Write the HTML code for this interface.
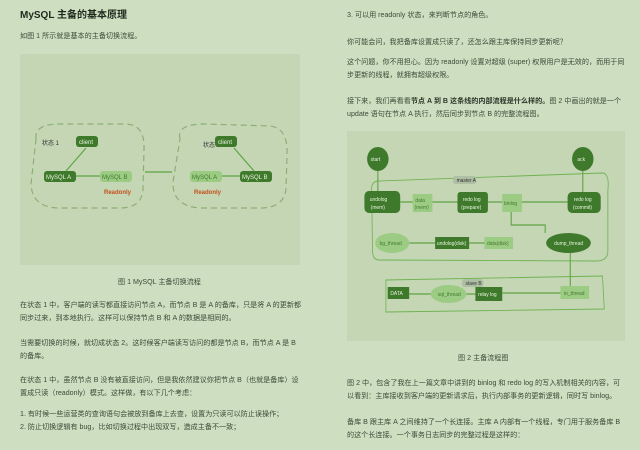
<!DOCTYPE html><html><head><meta charset="utf-8"><style>
body{margin:0;width:640px;height:450px;background:#cedfc1;font-family:"Liberation Sans","Noto Sans CJK SC",sans-serif;color:#3a4a38;position:relative;overflow:hidden}
.t{position:absolute;font-size:7.1px;line-height:13px;white-space:nowrap}
.h{font-size:10px;font-weight:bold;color:#1f2a1e}
b{color:#2a3528}
.box{position:absolute;background:#c4d6b4}
</style></head><body>
<div class="t h" style="left:20px;top:9px">MySQL 主备的基本原理</div>
<div class="t" style="left:20px;top:30px">如图 1 所示就是基本的主备切换流程。</div>
<div class="box" style="left:20px;top:54px;width:280px;height:211px">
<svg width="280" height="211" font-family="Liberation Sans" font-size="6">
<path d="M16 85 Q14 70 40 70 L105 70 Q125 70 124 95 L123 135 Q122 154 100 154 L40 154 Q12 154 11 130 Z" fill="none" stroke="#8fae77" stroke-width="1.2" stroke-dasharray="6 4"/>
<path d="M160 85 Q156 70 185 70 L250 72 Q268 74 267 100 L266 135 Q264 154 240 154 L180 154 Q152 152 153 128 Z" fill="none" stroke="#8fae77" stroke-width="1.2" stroke-dasharray="6 4"/>
<text x="22" y="91" fill="#333">状态 1</text><text x="183" y="93" fill="#333">状态 2</text>
<rect x="56" y="82" width="22" height="11" rx="3" fill="#3f7a2c"/><text x="59" y="90" fill="#e8f3df">client</text>
<rect x="24" y="117" width="32" height="11" rx="3" fill="#3f7a2c"/><text x="26" y="125" fill="#e8f3df">MySQL A</text>
<rect x="80" y="117" width="32" height="11" rx="3" fill="#9ccc84"/><text x="82" y="125" fill="#3f7a2c">MySQL B</text>
<text x="84" y="140" fill="#c5501f" font-weight="bold">Readonly</text>
<path d="M66 94 L46 117 M56 122 L80 122 M125 118 L152 118" stroke="#5ea345" stroke-width="1.2"/>
<rect x="195" y="82" width="22" height="11" rx="3" fill="#3f7a2c"/><text x="198" y="90" fill="#e8f3df">client</text>
<rect x="170" y="117" width="32" height="11" rx="3" fill="#9ccc84"/><text x="172" y="125" fill="#3f7a2c">MySQL A</text>
<rect x="220" y="117" width="32" height="11" rx="3" fill="#3f7a2c"/><text x="222" y="125" fill="#e8f3df">MySQL B</text>
<text x="174" y="140" fill="#c5501f" font-weight="bold">Readonly</text>
<path d="M214 94 L234 117 M220 122 L202 122" stroke="#5ea345" stroke-width="1.2"/>
</svg></div>
<div class="t" style="left:118px;top:276px">图 1 MySQL 主备切换流程</div>
<div class="t" style="left:20px;top:299px">在状态 1 中，客户端的读写都直接访问节点 A，而节点 B 是 A 的备库，只是将 A 的更新都<br>同步过来，到本地执行。这样可以保持节点 B 和 A 的数据是相同的。</div>
<div class="t" style="left:20px;top:337px">当需要切换的时候，就切成状态 2。这时候客户端读写访问的都是节点 B，而节点 A 是 B<br>的备库。</div>
<div class="t" style="left:20px;top:374px">在状态 1 中，虽然节点 B 没有被直接访问，但是我依然建议你把节点 B（也就是备库）设<br>置成只读（readonly）模式。这样做，有以下几个考虑：</div>
<div class="t" style="left:20px;top:408px">1. 有时候一些运营类的查询语句会被放到备库上去查，设置为只读可以防止误操作；<br>2. 防止切换逻辑有 bug，比如切换过程中出现双写，造成主备不一致；</div>

<div class="t" style="left:347px;top:9px">3. 可以用 readonly 状态，来判断节点的角色。</div>
<div class="t" style="left:347px;top:36px">你可能会问，我把备库设置成只读了，还怎么跟主库保持同步更新呢？</div>
<div class="t" style="left:347px;top:56px">这个问题，你不用担心。因为 readonly 设置对超级 (super) 权限用户是无效的，而用于同<br>步更新的线程，就拥有超级权限。</div>
<div class="t" style="left:347px;top:95px">接下来，我们再看看<b>节点 A 到 B 这条线的内部流程是什么样的。</b>图 2 中画出的就是一个<br>update 语句在节点 A 执行，然后同步到节点 B 的完整流程图。</div>
<div class="box" style="left:347px;top:131px;width:278px;height:210px">
<svg width="278" height="210" font-family="Liberation Sans" font-size="5.5">
<g transform="translate(21,0) scale(0.895,1)">
<path d="M12 50 L262 42 Q270 42 268 60 L268 120 Q268 130 255 130 L12 129 Q4 129 5 115 L4 58 Q4 50 12 50Z" fill="none" stroke="#6fb252" stroke-width="0.9"/>
<path d="M20 149 L262 145 L264 178 L20 181Z" fill="none" stroke="#6fb252" stroke-width="0.9"/>
<rect x="95" y="45" width="26" height="8" rx="3" fill="#aebfa3"/><text x="99" y="51" fill="#333">master A</text>
<rect x="105" y="148" width="24" height="8" rx="3" fill="#aebfa3"/><text x="109" y="154" fill="#333">slave B</text>
<circle cx="11" cy="28" r="12" fill="#3f7a2c"/><text x="3" y="30" fill="#e8f3df">start</text>
<circle cx="240" cy="28" r="12" fill="#3f7a2c"/><text x="234" y="30" fill="#e8f3df">ack</text>
<rect x="-4" y="60" width="40" height="22" rx="5" fill="#3f7a2c"/><text x="2" y="70" fill="#e8f3df">undolog</text><text x="3" y="78" fill="#e8f3df">(mem)</text>
<rect x="50" y="63" width="22" height="18" fill="#9ccc84"/><text x="53" y="71" fill="#3f7a2c">data</text><text x="52" y="78" fill="#3f7a2c">(mem)</text>
<rect x="100" y="61" width="34" height="21" rx="3" fill="#3f7a2c"/><text x="106" y="70" fill="#e8f3df">redo log</text><text x="104" y="78" fill="#e8f3df">(prepare)</text>
<rect x="150" y="63" width="22" height="18" fill="#9ccc84"/><text x="152" y="74" fill="#3f7a2c">binlog</text>
<rect x="223" y="61" width="37" height="21" rx="5" fill="#3f7a2c"/><text x="230" y="70" fill="#e8f3df">redo log</text><text x="229" y="78" fill="#e8f3df">(commit)</text>
<ellipse cx="27" cy="112" rx="19" ry="10" fill="#9ccc84"/><text x="13" y="114" fill="#3f7a2c">bg_thread</text>
<rect x="75" y="106" width="38" height="12" fill="#3f7a2c"/><text x="77" y="114" fill="#e8f3df">undolog(disk)</text>
<rect x="130" y="106" width="32" height="12" fill="#9ccc84"/><text x="133" y="114" fill="#3f7a2c">data(disk)</text>
<ellipse cx="224" cy="112" rx="25" ry="10" fill="#3f7a2c"/><text x="208" y="114" fill="#e8f3df">dump_thread</text>
<rect x="22" y="156" width="24" height="12" fill="#3f7a2c"/><text x="25" y="164" fill="#e8f3df">DATA</text>
<ellipse cx="90" cy="163" rx="20" ry="9" fill="#9ccc84"/><text x="78" y="165" fill="#3f7a2c">sql_thread</text>
<rect x="120" y="156" width="30" height="14" fill="#3f7a2c"/><text x="123" y="165" fill="#e8f3df">relay log</text>
<rect x="215" y="155" width="32" height="13" fill="#9ccc84"/><text x="219" y="164" fill="#3f7a2c">io_thread</text>
<g stroke="#5ea345" stroke-width="1.2" fill="none"><path d="M11 40 L11 60 M36 71 L50 71 M72 71 L100 71 M134 71 L150 71 M172 71 L223 71 M240 61 L240 40 M160 81 L160 94 L198 94 L198 102 M46 112 L75 112 M113 112 L130 112 M226 122 L226 155 M215 162 L150 162 M120 163 L110 163 M70 163 L46 163"/></g>
</g>
</svg></div>
<div class="t" style="left:458px;top:352px">图 2 主备流程图</div>
<div class="t" style="left:347px;top:377px">图 2 中，包含了我在上一篇文章中讲到的 binlog 和 redo log 的写入机制相关的内容，可<br>以看到：主库接收到客户端的更新请求后，执行内部事务的更新逻辑，同时写 binlog。</div>
<div class="t" style="left:347px;top:416px">备库 B 跟主库 A 之间维持了一个长连接。主库 A 内部有一个线程，专门用于服务备库 B<br>的这个长连接。一个事务日志同步的完整过程是这样的：</div>
</body></html>
